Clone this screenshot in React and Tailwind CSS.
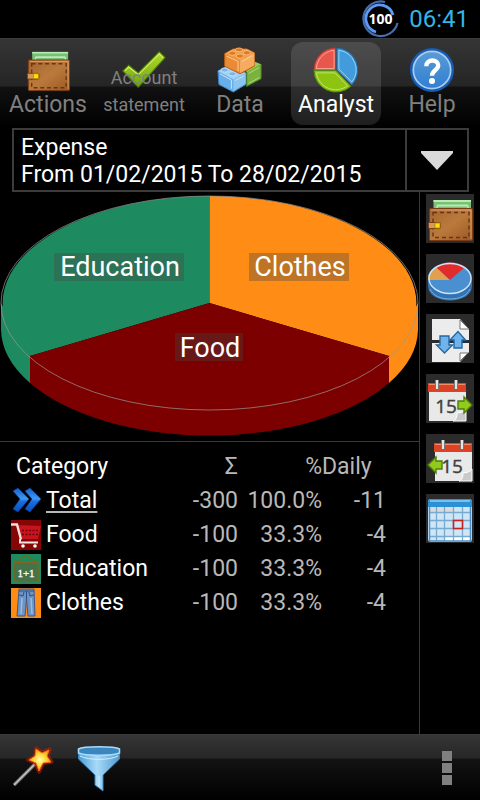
import React from "react";

function WalletIcon({ className }) {
  return (
    <svg viewBox="0 0 48 48" className={className} aria-hidden="true">
      <defs>
        <linearGradient id="leather" x1="0" y1="0" x2="1" y2="1">
          <stop offset="0" stopColor="#a5642e" />
          <stop offset="0.500" stopColor="#bb7a3c" />
          <stop offset="1" stopColor="#9a5825" />
        </linearGradient>
      </defs>
      <rect x="7.500" y="5" width="37.500" height="12" fill="#79bf78" />
      <path d="M7.500 6h37.500M11 10.500h31" stroke="#b9ecb0" strokeWidth="1.800" />
      <path d="M11 10.500v4M42 10.500v4" stroke="#b9ecb0" strokeWidth="1.500" />
      <rect x="3.500" y="13.500" width="43" height="32" rx="1" fill="url(#leather)" stroke="#7a3d15" />
      <path d="M5 15h40v29" fill="none" stroke="#d8a266" />
      <path d="M7 17.500h36v25H7z" fill="none" stroke="#6b3410" strokeWidth="1.400" strokeDasharray="4 3" />
      <rect x="2.500" y="27.500" width="12" height="6" rx="1" fill="#d39a58" stroke="#7a3d15" />
      <rect x="9" y="28" width="5" height="5" fill="#ffe000" stroke="#b38500" strokeWidth="0.800" />
    </svg>
  );
}

function CheckIcon({ className }) {
  return (
    <svg viewBox="0 0 48 48" className={className} aria-hidden="true">
      <defs>
        <linearGradient id="tick" x1="0" y1="0" x2="0" y2="1">
          <stop offset="0" stopColor="#b5dc2a" />
          <stop offset="1" stopColor="#6ba60b" />
        </linearGradient>
      </defs>
      <path d="M2 25l6-6 10 8L40 5l6 6-28 31z" fill="url(#tick)" stroke="#4f7d0a" strokeWidth="1.200" />
      <path d="M4 25l4-4 10 8L40 7l4 4" fill="none" stroke="#d6f06a" strokeWidth="1.200" />
    </svg>
  );
}

function BricksIcon({ className }) {
  return (
    <svg viewBox="0 0 48 48" className={className} aria-hidden="true">
      <path d="M31 25l9-5 6-2v15l-15 8z" fill="#7ab23e" stroke="#4f8426" />
      <path d="M28 22l11-7 7 3-15 8z" fill="#96cb58" />
      <path d="M33 27.500l11-6M33 38l11-6" stroke="#b0dc7c" />
      <path d="M1 25l10-5 19 7v12l-13 8L2 39z" fill="#68aee8" stroke="#3f86c4" />
      <path d="M1 25l10-5 19 7-13 7z" fill="#a3d0f4" />
      <path d="M17 34v12l13-8V27z" fill="#8cc4f0" />
      <path d="M3 28l12 6.500v9M19 35l9-5" fill="none" stroke="#cbe6fb" />
      <ellipse cx="8" cy="24" rx="3.800" ry="2.200" fill="#7ab6e8" stroke="#cbe6fb" strokeWidth="0.800" />
      <ellipse cx="16" cy="28" rx="3.800" ry="2.200" fill="#7ab6e8" stroke="#cbe6fb" strokeWidth="0.800" />
      <path d="M8 7l9-5h14l8 4v14l-15 8L8 20z" fill="#ea8a34" stroke="#b55c10" />
      <path d="M8 7l9-5h14l8 4-15 8z" fill="#f09c48" />
      <path d="M24 14v13l15-8V6z" fill="#f5ac60" />
      <path d="M10 9.500l12 5.500v10M26 15l11-6" fill="none" stroke="#ffd09a" />
      <ellipse cx="16" cy="6.500" rx="3.800" ry="2.200" fill="#dd7a22" stroke="#ffc88c" strokeWidth="0.800" />
      <ellipse cx="24" cy="9.500" rx="3.800" ry="2.200" fill="#dd7a22" stroke="#ffc88c" strokeWidth="0.800" />
      <ellipse cx="23" cy="3" rx="3.800" ry="2" fill="#dd7a22" stroke="#ffc88c" strokeWidth="0.800" />
      <ellipse cx="31" cy="6" rx="3.800" ry="2.200" fill="#dd7a22" stroke="#ffc88c" strokeWidth="0.800" />
    </svg>
  );
}

function PieIcon({ className }) {
  return (
    <svg viewBox="0 0 48 48" className={className} aria-hidden="true">
      <path d="M23.500 24.500V1A23 23 0 0 0 1 24.500z" fill="#e8574c" stroke="#b3362e" />
      <path d="M24 24.500H1A23 23 0 0 0 39.500 41z" fill="#8cc411" stroke="#4d8a12" />
      <path d="M25 24V1A23 23 0 0 1 40.500 39.500z" fill="#429bdb" stroke="#1a6cad" />
      <path d="M22 22.500V3.500A20.500 20.500 0 0 0 3.500 22.500z" fill="none" stroke="#f8a59d" />
      <path d="M23 27H3.500A20.500 20.500 0 0 0 36 40.500z" fill="none" stroke="#c3e56b" />
      <path d="M27 23V3.500A20.500 20.500 0 0 1 40.500 36.500z" fill="none" stroke="#98d2f7" />
    </svg>
  );
}

function HelpIcon({ className }) {
  return (
    <svg viewBox="0 0 48 48" className={className} aria-hidden="true">
      <defs>
        <linearGradient id="helpFill" x1="0" y1="0" x2="0" y2="1">
          <stop offset="0" stopColor="#5b9bd6" />
          <stop offset="1" stopColor="#2f7fd2" />
        </linearGradient>
      </defs>
      <circle cx="24" cy="24" r="23" fill="#165cb4" />
      <circle cx="24" cy="24" r="19.500" fill="url(#helpFill)" stroke="#a9cdee" strokeWidth="1.800" />
      <path d="M18 20c0-8 12.500-7.500 12.500-1 0 5.500-6.500 5-6.500 11" fill="none" stroke="#fff" strokeWidth="4.500" />
      <circle cx="24" cy="35.500" r="3.200" fill="#fff" />
    </svg>
  );
}

function Pie3dIcon({ className }) {
  return (
    <svg viewBox="0 0 48 48" className={className} aria-hidden="true">
      <path d="M2 23v8c0 9 10 14.500 22 14.500S46 40 46 31v-8z" fill="#3273b4" />
      <path d="M4 34c3 7 11 10 20 10s17-3 20-10" fill="none" stroke="#77b3e6" />
      <ellipse cx="24" cy="23" rx="22" ry="15.500" fill="#4a8fd0" />
      <path d="M24 25H2c0-6 2-9 8-13z" fill="#e0a050" />
      <path d="M24 25L10 12c8-6 21-6 29 0z" fill="#e22b2b" />
      <ellipse cx="24" cy="23.500" rx="21" ry="15" fill="none" stroke="#cfe4f5" strokeWidth="1.300" />
    </svg>
  );
}

function PagesIcon({ className }) {
  return (
    <svg viewBox="0 0 48 48" className={className} aria-hidden="true">
      <path d="M6 4h28l9 10v11H6z" fill="#ececec" />
      <path d="M34 5v9h9z" fill="#fff" stroke="#777" />
      <path d="M6 28h37v9l-9 10H6z" fill="#ececec" />
      <path d="M34 46V38h8z" fill="#fff" stroke="#777" />
      <path d="M14 21h9v9h3.500l-8 8-8-8H14z" fill="#6fb4ec" stroke="#2468a3" strokeWidth="1.400" />
      <path d="M28 33h8V25h3.500L32 16.500 24 25h4z" fill="#6fb4ec" stroke="#2468a3" strokeWidth="1.400" />
    </svg>
  );
}

function CalendarDayIcon({ className, back }) {
  return (
    <svg viewBox="0 0 48 48" className={className} aria-hidden="true">
      <g transform={back ? "translate(6 0)" : "translate(0 0)"}>
        <path d="M3 15h37v31H3z" fill="#e9e9e9" />
        <path d="M2 8h38v9H2z" fill="#dd4322" />
        <path d="M3 9.500h36" stroke="#f58a6a" />
        <path d="M11 5v9M30 5v9" stroke="#777" strokeWidth="4" />
        <path d="M11 5v9M30 5v9" stroke="#e6e6e6" strokeWidth="2" />
        <path d="M27 46c4-1 4-6 4-8 4 0 8-2 9-4v12z" fill="#c9c9c9" stroke="#fff" />
        <text x="20" y="38" textAnchor="middle" fontSize="19" fill="#3f3f3f" stroke="#3f3f3f" strokeWidth="0.400" className="font-[Open_Sans,sans-serif]">
          15
        </text>
      </g>
      {back ? (
        <path d="M2 30L10 22v4h6v8h-6v4z" fill="#93cc18" stroke="#4c7d0c" strokeWidth="1.400" />
      ) : (
        <path d="M46 30L38 22v4h-6v8h6v4z" fill="#93cc18" stroke="#4c7d0c" strokeWidth="1.400" />
      )}
    </svg>
  );
}

function CalendarMonthIcon({ className }) {
  return (
    <svg viewBox="0 0 48 48" className={className} aria-hidden="true">
      <rect x="2" y="4" width="44" height="43" rx="3" fill="#cfe6f6" />
      <path d="M2 12V7a3 3 0 0 1 3-3h38a3 3 0 0 1 3 3v5z" fill="#2c90d4" />
      <path d="M4 6h40" stroke="#79c0ee" strokeWidth="2" />
      <path d="M4 12h23v5H4z" fill="#dcdcdc" />
      <path d="M19 41h25v5H19z" fill="#fff" />
      <path d="M4 17.500h41M4 25.500h41M4 33.500h41M4 41.500h41M10.500 12v34M18.500 12v34M27.500 12v34M36.500 12v34" stroke="#78a9cf" strokeWidth="1.300" />
      <path d="M3.500 12v34h41V12" fill="none" stroke="#4a8ec8" strokeWidth="1.500" />
      <rect x="27.500" y="25.500" width="9" height="8" fill="#cfe6f6" stroke="#c62020" strokeWidth="1.600" />
    </svg>
  );
}

function ChevronsIcon() {
  return (
    <svg viewBox="0 0 30 30" className="size-[30px] shrink-0" aria-hidden="true">
      <defs>
        <linearGradient id="chev" x1="0" y1="0" x2="0" y2="1">
          <stop offset="0" stopColor="#1160cc" />
          <stop offset="0.450" stopColor="#3f98f5" />
          <stop offset="0.550" stopColor="#1a6ee0" />
          <stop offset="1" stopColor="#0b4fc0" />
        </linearGradient>
      </defs>
      <path d="M2 5l5-3 11 11L7 26l-5-3 7-10z" fill="url(#chev)" stroke="#0a3f96" strokeWidth="0.600" />
      <path d="M14 5l5-3 11 11-11 13-5-3 7-10z" fill="url(#chev)" stroke="#0a3f96" strokeWidth="0.600" />
    </svg>
  );
}

function CartIcon() {
  return (
    <svg viewBox="0 0 30 30" className="size-[30px] shrink-0" aria-hidden="true">
      <rect width="30" height="30" fill="#860606" />
      <path d="M5 5l25 1-3 13H9z" fill="#c8141f" />
      <path d="M11 10.500h17M11 14.500h16" stroke="#6e0008" strokeWidth="1.500" strokeDasharray="2 1.500" />
      <path d="M0 4.500h6l4 15" fill="none" stroke="#f3dede" strokeWidth="2.400" />
      <path d="M9 19v3.500h18" fill="none" stroke="#f3e4e4" strokeWidth="2" />
      <circle cx="12" cy="26" r="1.800" fill="#fff" />
      <circle cx="24" cy="26" r="1.800" fill="#fff" />
    </svg>
  );
}

function BoardIcon() {
  return (
    <svg viewBox="0 0 30 30" className="size-[30px] shrink-0" aria-hidden="true">
      <rect width="30" height="30" fill="#1e8a60" />
      <path d="M5 8l10-7 10 7" fill="none" stroke="#6d6a1d" strokeWidth="1.200" />
      <rect x="3" y="8.500" width="24" height="19" fill="#46724a" stroke="#7d6620" strokeWidth="1.300" />
      <text x="15" y="22.500" textAnchor="middle" fontSize="11" fill="#fff" stroke="#fff" strokeWidth="0.300" className="font-[Liberation_Serif,serif]">
        1+1
      </text>
    </svg>
  );
}

function JeansIcon() {
  return (
    <svg viewBox="0 0 30 30" className="size-[30px] shrink-0" aria-hidden="true">
      <rect width="30" height="30" fill="#ff8c14" />
      <path d="M8 1h15l1 27h-7L15.500 11 14 28H6z" fill="#6d94c6" stroke="#3a5b8b" />
      <path d="M8 3h15M8 7l4 1 1-4M23 7l-4 1-1-4M15.500 3v8" fill="none" stroke="#2f4f80" />
      <path d="M11 10l-1 16M20 10l1 16" stroke="#9cbce2" strokeWidth="1.500" />
    </svg>
  );
}

function WandIcon() {
  return (
    <svg viewBox="0 0 48 48" className="size-12" aria-hidden="true">
      <defs>
        <radialGradient id="star">
          <stop offset="0" stopColor="#ffffb0" />
          <stop offset="0.550" stopColor="#ffd736" />
          <stop offset="1" stopColor="#f7a010" />
        </radialGradient>
      </defs>
      <path d="M5 41L26 20" stroke="#6c6c6c" strokeWidth="3.600" />
      <path d="M5 41L26 20" stroke="#c8c8c8" strokeWidth="1.500" />
      <path d="M27 4l6 4 8-3-2 7 4 6-8 1-5 9-4-9-7-3 7-4z" fill="none" stroke="#c01800" strokeOpacity="0.600" strokeWidth="3.500" strokeLinejoin="round" />
      <path d="M27 5l6 4 7-3-2 6 4 6-8 1-4 8-3-8-7-3 6-4z" fill="url(#star)" stroke="#f0701a" strokeLinejoin="round" />
    </svg>
  );
}

function FunnelIcon() {
  return (
    <svg viewBox="0 0 48 48" className="size-12" aria-hidden="true">
      <defs>
        <linearGradient id="funnel" x1="0" y1="0" x2="1" y2="0">
          <stop offset="0" stopColor="#4a9dd6" />
          <stop offset="0.450" stopColor="#a9daf8" />
          <stop offset="1" stopColor="#4f9bd2" />
        </linearGradient>
      </defs>
      <path d="M3.500 6v9L20 31v10l8 6V31l16.500-16V6z" fill="url(#funnel)" stroke="#3a86c0" />
      <path d="M3.500 5c5-3 36-3 41 0v4c-7 3-34 3-41 0z" fill="#3b86bf" stroke="#a8dafa" strokeWidth="1.500" />
      <path d="M5 12c9 4.500 29 4.500 38 0M24 32v11" fill="none" stroke="#d2eefe" />
    </svg>
  );
}

function BatteryRing() {
  return (
    <svg viewBox="0 0 38 38" className="size-[38px]" role="img" aria-label="Battery 100">
      <path d="M24 2A17.300 17.300 0 1 0 36.500 23" fill="none" stroke="#476dae" strokeWidth="2.200" />
      <path d="M32 15A13.800 13.800 0 1 0 15 32" fill="none" stroke="#5b9bf5" strokeWidth="2.800" />
      <text x="19.500" y="24" textAnchor="middle" fontSize="14" fontWeight="700" fill="#fff" className="font-[Noto_Sans,sans-serif]">
        100
      </text>
    </svg>
  );
}

const tabs = [
  { label: "Actions", Icon: WalletIcon },
  { label: "Account statement", Icon: CheckIcon, long: true },
  { label: "Data", Icon: BricksIcon },
  { label: "Analyst", Icon: PieIcon, active: true },
  { label: "Help", Icon: HelpIcon },
];

function Tab({ label, Icon, long, active }) {
  return (
    <button
      type="button"
      aria-pressed={Boolean(active)}
      className={
        "relative mx-[3px] flex h-[83px] flex-col items-center rounded-xl pt-[5px] " +
        (active ? "bg-white/12 text-white" : "text-[#808080]")
      }
    >
      <Icon className="size-[46px] shrink-0" />
      {long ? (
        <span className="absolute inset-x-0 bottom-[7px] text-center text-[18px] leading-[27px]">{label}</span>
      ) : (
        <span className="text-[23px] leading-[24px]">{label}</span>
      )}
    </button>
  );
}

function PieChart() {
  return (
    <svg viewBox="0 0 419 249" className="block w-full" role="img" aria-label="Expense by category">
      <path d="M1 111v27A208.500 107 0 0 0 30 191V164z" fill="#1e8a60" />
      <path d="M418 111v27A208.500 107 0 0 1 389 191V164z" fill="#ff8c14" />
      <path d="M30 164v27A208.500 107 0 0 0 389 191V164z" fill="#7d0000" />
      <path d="M209.500 111L30 164A208.500 107 0 0 1 209.500 4z" fill="#1e8a60" />
      <path d="M209.500 111V4A208.500 107 0 0 1 389 164z" fill="#ff8c14" />
      <path d="M209.500 111L389 164A208.500 107 0 0 1 30 164z" fill="#7d0000" />
      <ellipse cx="209.500" cy="111" rx="208.500" ry="107" fill="none" stroke="#999" strokeOpacity="0.700" />
      <g fill="#444" fillOpacity="0.350">
        <rect x="54" y="61" width="130" height="28" />
        <rect x="249" y="61" width="100" height="28" />
        <rect x="175" y="141" width="68" height="28" />
      </g>
      <g fill="#fff" fontSize="27" textAnchor="middle">
        <text x="120" y="84">Education</text>
        <text x="300" y="84">Clothes</text>
        <text x="210" y="165">Food</text>
      </g>
    </svg>
  );
}

const rows = [
  { name: "Total", Icon: ChevronsIcon, sum: "-300", share: "100.0%", daily: "-11", total: true },
  { name: "Food", Icon: CartIcon, sum: "-100", share: "33.3%", daily: "-4" },
  { name: "Education", Icon: BoardIcon, sum: "-100", share: "33.3%", daily: "-4" },
  { name: "Clothes", Icon: JeansIcon, sum: "-100", share: "33.3%", daily: "-4" },
];

function CategoryTable() {
  return (
    <div className="pt-2 pr-[33px]">
      <table className="w-full table-fixed text-[23px] leading-[34px] text-[#b8b8b8]">
        <thead>
          <tr className="h-[34px]">
            <th scope="col" className="pl-4 text-left font-normal text-white">Category</th>
            <th scope="col" className="w-[72px] text-right font-normal">Σ</th>
            <th scope="col" className="w-[84px] text-right font-normal">%</th>
            <th scope="col" className="w-16 text-left font-normal">Daily</th>
          </tr>
        </thead>
        <tbody>
          {rows.map(({ name, Icon, sum, share, daily, total }) => (
            <tr key={name} className="h-[34px]">
              <th scope="row" className="p-0 pl-[11px] text-left font-normal text-white">
                <span className="flex items-center gap-[5px]">
                  <Icon />
                  {total ? (
                    <a href="#total" className="underline decoration-[#b8b8b8] decoration-2 underline-offset-3">{name}</a>
                  ) : (
                    <span>{name}</span>
                  )}
                </span>
              </th>
              <td className="p-0 text-right">{sum}</td>
              <td className="p-0 text-right">{share}</td>
              <td className="p-0 text-right">{daily}</td>
            </tr>
          ))}
        </tbody>
      </table>
    </div>
  );
}

const tools = [
  { label: "Accounts", icon: <WalletIcon className="size-12" /> },
  { label: "Chart", icon: <Pie3dIcon className="size-12" /> },
  { label: "Split pages", icon: <PagesIcon className="size-12" /> },
  { label: "Next period", icon: <CalendarDayIcon className="size-12" /> },
  { label: "Previous period", icon: <CalendarDayIcon className="size-12" back /> },
  { label: "Choose month", icon: <CalendarMonthIcon className="size-12" /> },
];

export default function App() {
  return (
    <div className="flex min-h-screen flex-col bg-black font-[Roboto,sans-serif] text-white">
      <div className="flex h-[38px] items-center justify-end gap-[10px] pr-[11px]">
        <BatteryRing />
        <time className="text-[24px] leading-8 text-[#33b5e5]">06:41</time>
      </div>

      <nav className="grid h-[90px] grid-cols-5 items-start border-t border-[#3c3c3c] pt-[3px] [background-image:linear-gradient(to_bottom,#353535_0,#252525_47px,#111111_48px,#000000_88px)]">
        {tabs.map((tab) => (
          <Tab key={tab.label} {...tab} />
        ))}
      </nav>

      <button
        type="button"
        aria-haspopup="listbox"
        className="mr-[11px] ml-3 flex h-16 items-stretch border-2 border-[#3c3c3c] text-left text-[23px] leading-[27px]"
      >
        <span className="flex-1 pt-1 pl-[7px]">
          <span className="block">Expense</span>
          <span className="block">From 01/02/2015 To 28/02/2015</span>
        </span>
        <span className="flex w-[62px] items-center justify-center border-l-2 border-[#3c3c3c]">
          <svg viewBox="0 0 32 20" className="h-5 w-8" aria-hidden="true">
            <path d="M0 1h32v2L16 20 0 3z" fill="#dadada" />
          </svg>
        </span>
      </button>

      <main className="flex flex-1">
        <section className="min-w-0 flex-1">
          <div className="border-b border-[#383838]">
            <PieChart />
          </div>
          <CategoryTable />
        </section>
        <aside className="flex w-[61px] flex-col items-start gap-[11px] border-l border-[#383838] pt-[2px] pl-[6px]">
          {tools.map(({ label, icon }) => (
            <button key={label} type="button" aria-label={label} className="h-[49px] bg-[#2b2b2b]">
              {icon}
            </button>
          ))}
        </aside>
      </main>

      <footer className="flex h-[66px] items-center border-t border-[#3a3a3a] px-[9px] [background-image:linear-gradient(to_bottom,#353535_0,#272727_23px,#131313_24px,#000000_65px)]">
        <button type="button" aria-label="Wizard">
          <WandIcon />
        </button>
        <button type="button" aria-label="Filter" className="ml-[18px]">
          <FunnelIcon />
        </button>
        <button type="button" aria-label="More options" className="ml-auto flex w-12 flex-col items-center gap-[2px]">
          <span className="size-[10px] bg-[#808080]" />
          <span className="size-[10px] bg-[#808080]" />
          <span className="size-[10px] bg-[#808080]" />
        </button>
      </footer>
    </div>
  );
}
